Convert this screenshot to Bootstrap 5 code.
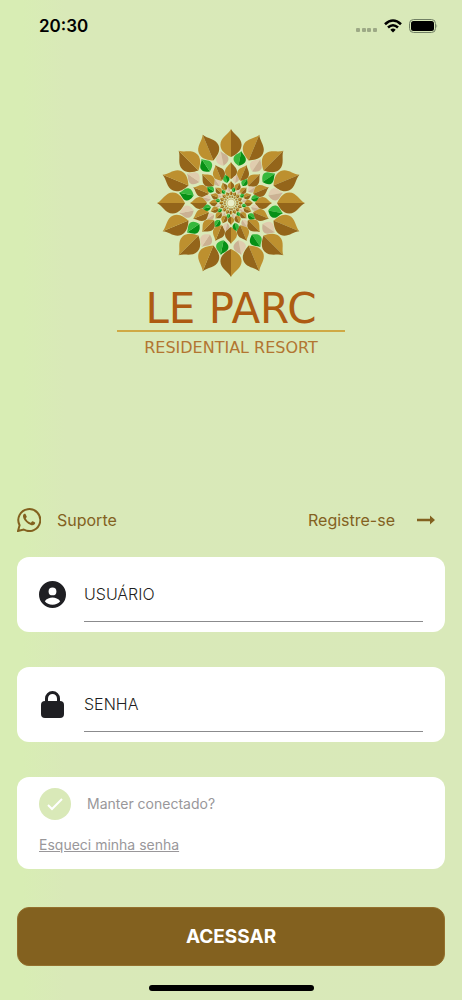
<!DOCTYPE html>
<html lang="pt-BR">
<head>
<meta charset="utf-8">
<meta name="viewport" content="width=device-width, initial-scale=1">
<title>Le Parc Residential Resort</title>
<link href="https://cdn.jsdelivr.net/npm/bootstrap@5.3.0/dist/css/bootstrap.min.css" rel="stylesheet">
<style>
  :root { --brown: #83611f; --ink: #1f1f23; --leaf: #d9e9b8; }
  body {
    font-family: Inter, "Liberation Sans", sans-serif;
    font-size: 16px; line-height: 24px; color: var(--ink);
    background: linear-gradient(90deg, #d8edb4 0, #d8edb4 5%, #d9e9b8 14%, #d9e9b9 100%);
  }
  svg { display: block; flex: none; }
  .screen { padding: 0 17px; }
  .statusbar { height: 50px; padding: 2px 7px 0 22px; }
  .clock { font-size: 17px; font-weight: 600; color: #000; }
  .brand { padding-top: 76px; color: #ad5b12; font-family: "DejaVu Sans", sans-serif; }
  .brand-name { font-size: 42px; line-height: 42px; margin-top: 8px; }
  .brand-rule { width: 228px; height: 2px; background: #cfa945; }
  .brand-sub { font-size: 16px; line-height: 24px; margin-top: 4px; color: #b27531; }
  .links { margin-top: 148px; margin-bottom: 25px; padding-right: 10px; }
  .links a { color: var(--brown); text-decoration: none; }
  .links .register { gap: 22px; }
  .panel { background: #fff; border-radius: 12px; padding: 9px 22px 10px; }
  .field { margin-bottom: 35px; }
  .field .form-control {
    height: 56px; padding: 0; border: 0; border-bottom: 1px solid #8b8b8d; border-radius: 0;
    background: transparent; font-size: 16px; color: var(--ink); box-shadow: none;
  }
  .field .form-control::placeholder { color: var(--ink); opacity: 1; font-weight: 300; }
  .field label { flex: none; width: 45px; }
  .options { font-size: 14px; color: #99979a; padding-bottom: 12px; }
  .keep { height: 36px; gap: 16px; }
  .keep .form-check-input {
    width: 32px; height: 32px; margin: 0; border: 0; border-radius: 50%;
    background: var(--leaf) url("data:image/svg+xml,%3Csvg xmlns='http://www.w3.org/2000/svg' viewBox='0 0 32 32'%3E%3Cpath d='M9 17l4 4 10-10' fill='none' stroke='%23fff' stroke-width='2'/%3E%3C/svg%3E") center/32px no-repeat;
  }
  .forgot { color: #99979a; margin-top: 11px; }
  .enter {
    margin-top: 38px; height: 59px; border-radius: 12px; font-size: 19px; font-weight: 700; padding-top: 8px;
    --bs-btn-bg: var(--brown); --bs-btn-color: #fff; --bs-btn-border-color: #94702d;
    --bs-btn-hover-bg: #73541a; --bs-btn-hover-color: #fff;
  }
  .home { width: 165px; height: 6px; border-radius: 3px; background: #000; margin: 19px auto 9px; }
</style>
</head>
<body>
<div class="screen container-fluid d-flex flex-column">
  <header class="statusbar d-flex align-items-center justify-content-between">
    <span class="clock">20:30</span>
    <div class="d-flex align-items-center gap-1">
      <svg width="24" height="16" viewBox="0 0 24 16" fill="#000" opacity=".27"><rect x="0" y="10" width="4" height="4" rx="1"/><rect x="6" y="10" width="4" height="4" rx="1"/><rect x="11" y="10" width="4" height="4" rx="1"/><rect x="17" y="10" width="4" height="4" rx="1"/></svg>
      <svg width="18" height="14" viewBox="0 0 18 14" fill="none" stroke="#000" stroke-width="2.6"><path d="M1 5.2Q9-2.2 17 5.2M4 8.5Q9 4 14 8.5"/><path d="M9 13.4L6.3 10.7Q9 8.5 11.7 10.7z" fill="#000" stroke="none"/></svg>
      <svg width="32" height="16" viewBox="0 0 32 16"><rect x="3.500" y="1.500" width="26" height="13" rx="4" fill="none" stroke="#718064"/><rect x="5" y="3" width="23" height="10" rx="2.500"/><path d="M30.500 6q1.500 2 0 4z" fill="#718064"/></svg>
    </div>
  </header>

  <section class="brand d-flex flex-column align-items-center">
    <svg id="rosette" width="154" height="154" viewBox="-77 -77 154 154" role="img" aria-label="Le Parc"></svg>
    <div class="brand-name">LE PARC</div>
    <div class="brand-rule"></div>
    <div class="brand-sub">RESIDENTIAL RESORT</div>
  </section>

  <form>
    <nav class="links d-flex justify-content-between align-items-center">
      <a href="#suporte" class="d-flex align-items-center gap-3">
        <svg width="24" height="24" viewBox="0 0 24 24"><path d="M1 23l1.600-5.800A11 11 0 1 1 6.700 21.500z" fill="none" stroke="currentColor" stroke-width="2"/><path d="M8.600 6.200c-.3-.6-.8-.5-1.200-.4-.8.3-1.500 1.400-1.400 2.700.1 2.200 2.300 5.300 5.200 7.200 2.200 1.400 4.600 2.200 6.100.9.900-.8 1-1.800.8-2.100-.3-.4-2-1.200-2.500-1.300-.4-.1-.7.200-1.500 1.300-.3.300-.6.300-1 .100-1.900-.9-3.300-2.100-4.300-4-.200-.4.900-1.200 1-1.900z" fill="currentColor"/></svg>
        <span>Suporte</span>
      </a>
      <a href="#registro" class="register d-flex align-items-center">
        <span>Registre-se</span>
        <svg width="18" height="12" viewBox="0 0 18 12" fill="currentColor"><path d="M0 4.700h13V1.600L18 6l-5 4.400V7.300H0z"/></svg>
      </a>
    </nav>

    <div class="panel field d-flex align-items-center">
      <label for="usuario">
        <svg width="27" height="27" viewBox="2 2 20 20" fill="currentColor" role="img" aria-label="Usuário"><path fill-rule="evenodd" d="M12 2a10 10 0 1 0 0 20 10 10 0 0 0 0-20zm0 4.800a2.900 2.900 0 1 1 0 5.800A2.900 2.900 0 0 1 12 6.800zm0 12.700c-2.400 0-4.500-.9-5.700-2.500C7.500 15 10 14.200 12 14.200s4.500.8 5.700 2.800c-1.200 1.600-3.300 2.500-5.700 2.500z"/></svg>
      </label>
      <input class="form-control" id="usuario" type="text" placeholder="USUÁRIO" autocomplete="username">
    </div>
    <div class="panel field d-flex align-items-center">
      <label for="senha">
        <svg width="27" height="27" viewBox="0 0 27 27" role="img" aria-label="Senha"><path d="M7.500 13V7.500a6 6 0 0 1 12 0V13" fill="none" stroke="currentColor" stroke-width="3"/><rect x="2" y="10" width="23" height="17" rx="4" fill="currentColor"/></svg>
      </label>
      <input class="form-control" id="senha" type="password" placeholder="SENHA" autocomplete="current-password">
    </div>
    <div class="panel options">
      <div class="keep d-flex align-items-center">
        <input class="form-check-input" type="checkbox" id="manter">
        <label for="manter">Manter conectado?</label>
      </div>
      <a href="#recuperar" class="forgot d-inline-block">Esqueci minha senha</a>
    </div>
    <button type="submit" class="btn enter w-100">ACESSAR</button>
  </form>
  <div class="home"></div>
</div>
<script>
  // Rings of two-tone petals: inner radius, outer radius, half width, half-step turn, colours
  const gold = ['#bd902f', '#94651a'], green = ['#36b83c', '#079016'], rose = ['#e0ccae', '#cbb193'];
  const rings = [
    [46, 74, 10.6, 0, gold, gold], [38, 53, 6.2, 1, green, rose], [24, 41, 6, 0, gold, gold],
    [20.5, 29, 3.2, 1, rose, green], [13.5, 22, 3.2, 0, gold, gold], [11, 16, 1.8, 1, green, rose],
    [7.5, 12, 1.7, 0, gold, gold], [5, 8, 1, 1, gold, gold]
  ];
  let art = '';
  for (const [a, b, w, turn, even, odd] of rings) {
    const d = b - a;
    const half = s => `M0 ${-b}C${s * w * .25} ${-b + d * .2} ${s * w} ${-b + d * .3} ${s * w} ${-b + d * .56}C${s * w} ${-b + d * .8} ${s * w * .4} ${-a - d * .08} 0 ${-a}Z`;
    for (let i = 0; i < 16; i++) {
      const angle = i * 22.5 + turn * 11.25, c = i % 2 ? odd : even;
      const flip = angle > 190 && angle < 330 ? -1 : 1;
      art += `<g transform="rotate(${angle})"><path d="${half(-1)}" fill="${c[flip > 0 ? 0 : 1]}"/><path d="${half(1)}" fill="${c[flip > 0 ? 1 : 0]}"/></g>`;
    }
  }
  document.getElementById('rosette').innerHTML = art + '<circle r="4" fill="#e9efc8" stroke="#b8a050" stroke-width=".6"/>';
</script>
<script src="https://cdn.jsdelivr.net/npm/bootstrap@5.3.0/dist/js/bootstrap.bundle.min.js"></script>
</body>
</html>
